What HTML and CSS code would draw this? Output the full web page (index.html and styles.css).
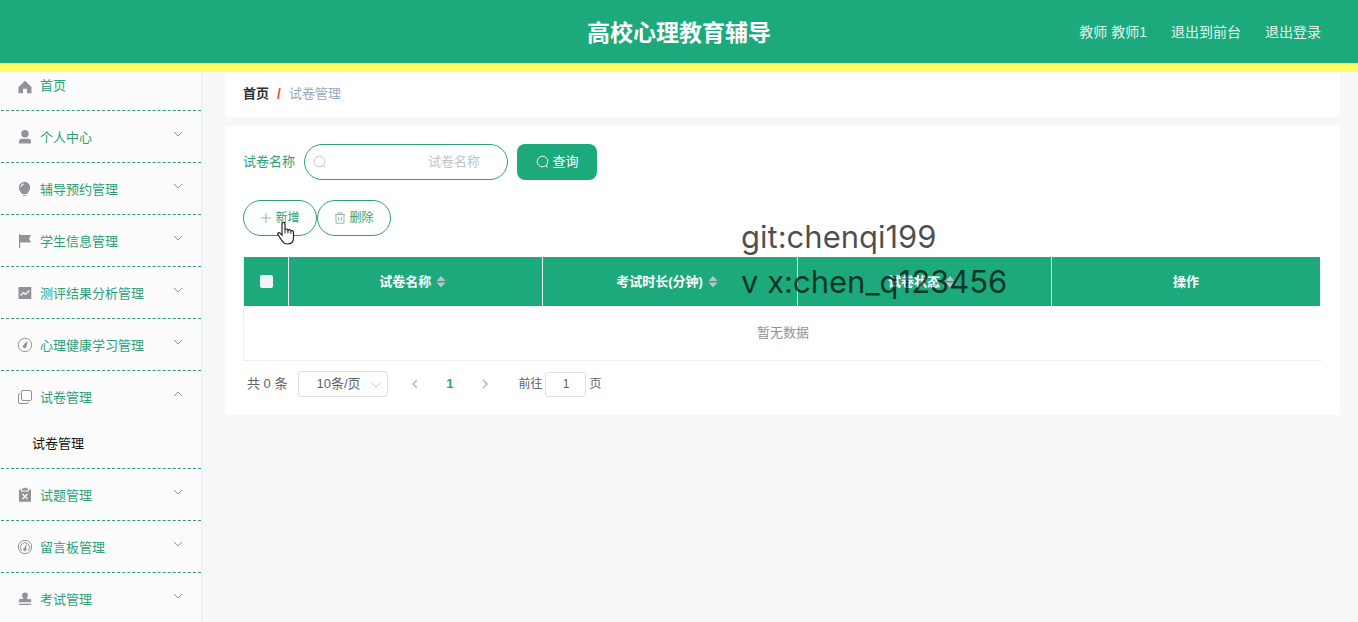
FILE: index.html
```html
<!DOCTYPE html>
<html lang="zh-CN">
<head>
<meta charset="utf-8">
<title>高校心理教育辅导</title>
<link rel="stylesheet" href="styles.css">
</head>
<body>
<svg class="defs" aria-hidden="true">
  <symbol id="down" viewBox="0 0 10 10"><path d="M1 3l4 4 4-4" fill="none" stroke="currentColor"/></symbol>
  <symbol id="up" viewBox="0 0 10 10"><path d="M1 7l4-4 4 4" fill="none" stroke="currentColor"/></symbol>
  <symbol id="search" viewBox="0 0 14 14"><circle cx="6.500" cy="6.500" r="5.300" fill="none" stroke="currentColor"/><path d="M9.700 10.500l2.300 2" stroke="currentColor"/></symbol>
  <symbol id="sort" viewBox="0 0 10 12"><path d="M5 0l4.500 5h-9zM5 11.500l4.500-5h-9z" fill="currentColor"/></symbol>
</svg>
<header class="header">
  <h1 class="title">高校心理教育辅导</h1>
  <nav class="account">
    <span>教师 教师1</span>
    <a href="#">退出到前台</a>
    <a href="#">退出登录</a>
  </nav>
</header>
<div class="layout">
  <nav class="sidebar">
    <ul class="menu">
      <li class="group first"><a class="item" href="#"><svg class="icon" viewBox="0 0 16 16"><path d="M8 1.800L14.500 8v6.200H10V9.800H6v4.400H1.500V8z"/></svg><span>首页</span></a></li>
      <li class="group"><a class="item" href="#"><svg class="icon" viewBox="0 0 16 16"><circle cx="8" cy="4.800" r="3.700"/><path d="M2 14.500v-2c0-1.800 1-2.700 2.700-2.700h6.600c1.700 0 2.700.9 2.700 2.700v2z"/></svg><span>个人中心</span><svg class="arrow"><use href="#down"/></svg></a></li>
      <li class="group"><a class="item" href="#"><svg class="icon" viewBox="0 0 16 16"><path fill-rule="evenodd" d="M7.500.8a5.700 5.700 0 0 1 5.700 5.700c0 2.700-2 4.500-3.200 6.500H5C3.800 11 1.800 9.200 1.800 6.500A5.700 5.700 0 0 1 7.500.8zM3.500 6.300h1c0-1.700 1-2.700 2.500-2.900v-1C5 2.500 3.500 4 3.500 6.300zM6 14h3v1H6z"/></svg><span>辅导预约管理</span><svg class="arrow"><use href="#down"/></svg></a></li>
      <li class="group"><a class="item" href="#"><svg class="icon" viewBox="0 0 16 16"><path d="M2 1h1.200v14H2zM3 2h11l-2 3.800 2 3.800H3z"/></svg><span>学生信息管理</span><svg class="arrow"><use href="#down"/></svg></a></li>
      <li class="group"><a class="item" href="#"><svg class="icon" viewBox="0 0 16 16"><path d="M1.500 2h12.800v12H1.500z"/><path d="M3.500 10.500l3-3 2 2 3.800-4" fill="none" stroke="#fcfcfc" stroke-width="1.200"/></svg><span>测评结果分析管理</span><svg class="arrow"><use href="#down"/></svg></a></li>
      <li class="group"><a class="item" href="#"><svg class="icon" viewBox="0 0 16 16"><circle cx="8" cy="8" r="6.700" class="line"/><path d="M10.800 4l-1.200 5.200a1.900 1.900 0 1 1-2.700-1.600z"/></svg><span>心理健康学习管理</span><svg class="arrow"><use href="#down"/></svg></a></li>
      <li class="group"><a class="item" href="#"><svg class="icon" viewBox="0 0 16 16"><rect x="4.500" y="1.500" width="10" height="10" rx="1.500" class="line"/><path d="M3 4.500q-1.500 0-1.500 1.500v7q0 1.500 1.500 1.500h7q1.500 0 1.500-1.500" class="line"/></svg><span>试卷管理</span><svg class="arrow"><use href="#up"/></svg></a>
        <a class="subitem" href="#">试卷管理</a></li>
      <li class="group"><a class="item" href="#"><svg class="icon" viewBox="0 0 16 16"><path d="M2 2.500h2v2h8v-2h2v12.300H2zM5 1.500h1.500V.7h3v.8H11V3.500H5z"/><path d="M5.500 7l5 5m0-5l-5 5" stroke="#fcfcfc" stroke-width="1.200"/></svg><span>试题管理</span><svg class="arrow"><use href="#down"/></svg></a></li>
      <li class="group"><a class="item" href="#"><svg class="icon" viewBox="0 0 16 16"><circle cx="8" cy="8" r="6.700" class="line"/><path d="M4.500 11.500A4.600 4.600 0 1 1 11.500 11.500" class="line"/><path d="M9.700 4.200l-.5 5.100a1.700 1.700 0 1 1-1.800-.6z"/></svg><span>留言板管理</span><svg class="arrow"><use href="#down"/></svg></a></li>
      <li class="group"><a class="item" href="#"><svg class="icon" viewBox="0 0 16 16"><path d="M8 1.500a3 3 0 0 1 3 3c0 1.200-1.200 1.800-1.200 3.500H12.500c1.200 0 1.700.6 1.700 1.500v1.700H1.800V9.500C1.800 8.600 2.300 8 3.500 8h2.700C6.200 6.300 5 5.700 5 4.500a3 3 0 0 1 3-3zM1.800 12.700h12.400v1.200H1.800z"/></svg><span>考试管理</span><svg class="arrow"><use href="#down"/></svg></a></li>
    </ul>
  </nav>
  <main class="main">
    <nav class="crumbs"><a class="home" href="#">首页</a><span class="slash">/</span><span class="current">试卷管理</span></nav>
    <section class="card">
      <form class="search">
        <label for="name">试卷名称</label>
        <div class="field"><svg class="field-icon"><use href="#search"/></svg><input id="name" type="text" placeholder="试卷名称"></div>
        <button class="query" type="button"><svg class="query-icon"><use href="#search"/></svg>查询</button>
      </form>
      <div class="actions">
        <button class="action" type="button"><svg class="small-icon" viewBox="0 0 12 12"><path d="M6 1v10M1 6h10"/></svg>新增</button>
        <button class="action" type="button"><svg class="small-icon" viewBox="0 0 12 12"><path d="M1 2.500h10M4 2V.8h4V2M2 2.500v8.700h8V2.500M4.700 5v4M7.300 5v4"/></svg>删除</button>
        <svg class="cursor" viewBox="0 0 20 24"><path d="M6 14V3.300C6 .8 9 .8 9 3.300V9c.3-1.500 2.800-1.300 3 .4.600-1.200 2.700-.9 2.900.7.800-1 2.600-.5 2.600 1.200v5.200c0 4-2 6.500-6 6.500-3.200 0-4.500-1.300-6-4l-3.600-5.300c-1-1.600 1-2.700 2.200-1.500z" fill="#fff" stroke="#222" stroke-width="1.200"/><path d="M9 9v3.500M12 9.500v3M14.900 10.500v2.300" stroke="#222"/></svg>
      </div>
      <table class="table">
        <colgroup><col class="col-check"><col class="col-data"><col class="col-data"><col class="col-data"><col></colgroup>
        <thead><tr>
          <th><input class="check" type="checkbox" aria-label="全选"></th>
          <th class="sortable">试卷名称<svg class="sort"><use href="#sort"/></svg></th>
          <th class="sortable">考试时长(分钟)<svg class="sort"><use href="#sort"/></svg></th>
          <th class="sortable">试卷状态<svg class="sort"><use href="#sort"/></svg></th>
          <th>操作</th>
        </tr></thead>
        <tbody><tr><td colspan="5">暂无数据</td></tr></tbody>
      </table>
      <div class="pager">
        <span>共 0 条</span>
        <div class="size"><select aria-label="每页条数"><option>10条/页</option></select><svg class="size-arrow"><use href="#down"/></svg></div>
        <button class="page" type="button" aria-label="上一页"><svg class="turn" viewBox="0 0 10 10"><path d="M7 1L3 5l4 4"/></svg></button>
        <button class="page active" type="button">1</button>
        <button class="page" type="button" aria-label="下一页"><svg class="turn" viewBox="0 0 10 10"><path d="M3 1l4 4-4 4"/></svg></button>
        <label class="jump">前往<input type="text" value="1">页</label>
      </div>
    </section>
  </main>
</div>
<div class="watermark">git:chenqi199<br>v x:chen_q123456</div>
</body>
</html>
```
FILE: styles.css
```css
* { box-sizing: border-box; }
body {
  margin: 0;
  height: 100vh;
  overflow: hidden;
  display: flex;
  flex-direction: column;
  background: #f6f8fa;
  color: #606266;
  font: 13px/20px "Liberation Sans", "Noto Sans CJK SC", sans-serif;
}
a { color: inherit; text-decoration: none; }
button, input, select { font: inherit; color: inherit; margin: 0; }
svg { flex: none; }
.defs { position: absolute; width: 0; height: 0; }

.header {
  flex: none;
  display: grid;
  grid-template-columns: 1fr auto 1fr;
  align-items: center;
  height: 72px;
  padding: 0 37px;
  background: #1ca97b;
  border-bottom: 9px solid #ffff66;
}
.title { grid-column: 2; margin: 0; padding-top: 2px; color: #fff; font-size: 23px; line-height: 32px; }
.account { display: flex; justify-content: flex-end; gap: 24px; color: #e4f5ef; font-size: 14px; }

.layout { flex: 1; display: flex; min-height: 0; }
.sidebar {
  flex: none;
  width: 203px;
  overflow: hidden;
  background: #fcfcfc;
  border-right: 2px solid #eff1f3;
}
.menu { margin: 0; padding: 0 0 0 1px; list-style: none; }
.group { border-bottom: 1px dashed #2c9f78; color: #2c9f78; }
.item { display: flex; align-items: center; height: 51px; padding: 0 18px 0 16px; }
.item span { padding-top: 2px; }
.first .item { height: 38px; padding-bottom: 12px; }
.icon { width: 16px; height: 16px; margin-right: 7px; fill: #909399; }
.first .icon { margin-top: 3px; }
.line { fill: none; stroke: #909399; }
.arrow { width: 10px; height: 10px; margin: 0 0 6px auto; color: #909399; }
.subitem { display: block; padding: 12px 31px 14px; color: #111; }

.main { flex: 1; min-width: 0; padding: 0 18px 0 22px; }
.crumbs {
  display: flex;
  gap: 8px;
  padding: 12px 18px 13px;
  margin-bottom: 9px;
  background: #fff;
  border-radius: 0 0 4px 4px;
}
.home { color: #303133; font-weight: bold; }
.slash { color: #f04a24; font-size: 14px; font-weight: bold; }
.current { color: #97a8be; }
.card { padding: 18px; background: #fff; }

.search { display: flex; align-items: center; height: 36px; margin-bottom: 20px; }
.search label { color: #2c9f78; }
.field {
  display: flex;
  align-items: center;
  width: 204px;
  height: 36px;
  margin: 0 9px;
  padding: 0 27px 0 8px;
  border: 1px solid #2c9f78;
  border-radius: 18px;
}
.field-icon { width: 14px; height: 14px; color: #c0c4cc; }
.field input { flex: 1; min-width: 0; padding: 0; border: 0; outline: 0; background: none; text-align: right; }
.field input::placeholder { color: #c0c4cc; }
.query {
  display: flex;
  align-items: center;
  justify-content: center;
  gap: 3px;
  width: 80px;
  height: 36px;
  padding: 0;
  border: 0;
  border-radius: 8px;
  background: #1ca97b;
  color: #fff;
}
.query-icon { width: 14px; height: 14px; }
.actions { position: relative; display: flex; margin-bottom: 21px; }
.action {
  display: flex;
  align-items: center;
  justify-content: center;
  gap: 3px;
  width: 74px;
  height: 36px;
  padding: 0;
  border: 1px solid #2c9f78;
  border-radius: 18px;
  background: #fff;
  color: #2c9f78;
  font-size: 12px;
}
.small-icon { width: 12px; height: 12px; fill: none; stroke: #8fb9aa; }
.cursor { position: absolute; left: 33px; top: 21px; width: 20px; height: 24px; fill: none; }

.table { width: 100%; table-layout: fixed; border-collapse: separate; border-spacing: 0; border-left: 1px solid #ebeef5; }
.col-check { width: 45px; }
.col-data { width: 23.6%; }
.table th { height: 49px; padding: 0; background: #1ca97b; color: #fff; border-right: 1px solid #ebeef5; }
.table th.sortable { padding-right: 6px; }
.table th:last-child { border-right: 2px solid #fff; }
.table td { height: 55px; padding: 0; border-bottom: 1px solid #ebeef5; text-align: center; color: #909399; }
.sort { width: 10px; height: 12px; margin-left: 5px; vertical-align: -2px; color: #b5c5c9; }
.check { appearance: none; display: block; width: 13px; height: 13px; margin: 0 auto; border-radius: 2px; background: #f0f3f7; }

.pager { display: flex; align-items: center; margin-top: 10px; padding-left: 4px; }
.size { position: relative; margin: 0 9px 0 11px; }
.size select { appearance: none; display: block; width: 90px; height: 26px; padding: 0 17px; border: 1px solid #dcdfe6; border-radius: 3px; background: #fff; }
.size-arrow { position: absolute; right: 7px; top: 9px; width: 10px; height: 10px; color: #c0c4cc; }
.page { display: flex; align-items: center; justify-content: center; width: 35px; height: 26px; padding: 0; border: 0; background: none; }
.page.active { color: #1ca97b; font-weight: bold; }
.turn { width: 10px; height: 10px; fill: none; stroke: #b4b8c0; stroke-width: 1.500; }
.jump { display: flex; align-items: center; margin-left: 16px; font-size: 12px; }
.jump input { width: 41px; height: 25px; margin: 0 3px; padding: 0; border: 1px solid #dcdfe6; border-radius: 3px; text-align: center; }

.watermark {
  position: absolute;
  left: 741px;
  top: 214px;
  color: rgba(0, 0, 0, 0.7);
  font: 31px/45px Inter, sans-serif;
  white-space: nowrap;
  pointer-events: none;
}
```
